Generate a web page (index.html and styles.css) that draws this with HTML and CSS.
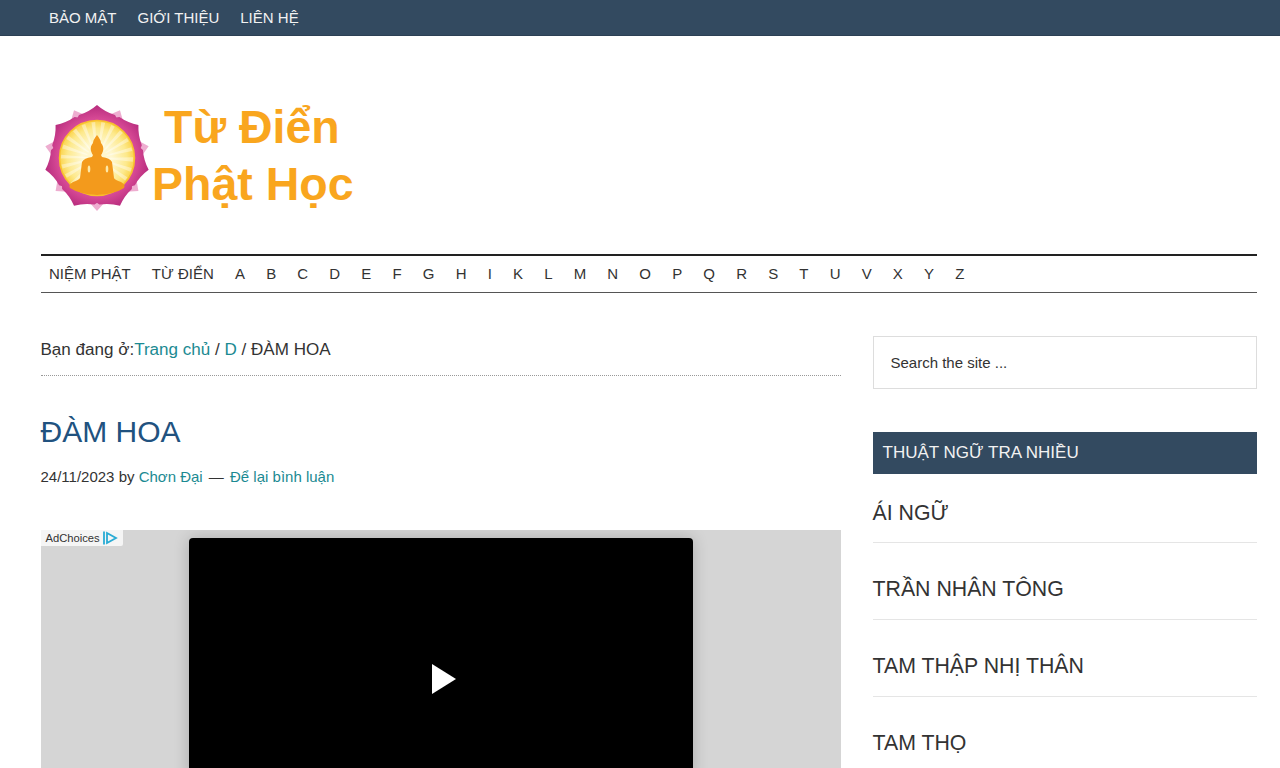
FILE: index.html
```html
<!DOCTYPE html>
<html lang="vi">
<head>
<meta charset="UTF-8">
<title>ĐÀM HOA - Từ Điển Phật Học</title>
<link rel="stylesheet" href="styles.css">
</head>
<body>
<nav class="top-bar">
<ul class="top-menu">
<li><a href="#">BẢO MẬT</a></li>
<li><a href="#">GIỚI THIỆU</a></li>
<li><a href="#">LIÊN HỆ</a></li>
</ul>
</nav>
<div class="site">
<header class="site-header">
<a class="logo" href="#">
<svg class="lotus" width="110" height="110" viewBox="-55 -55 110 110">
<defs>
<radialGradient id="petalFill" gradientUnits="userSpaceOnUse" cx="0" cy="0" r="54">
<stop offset="0.65" stop-color="#e0529c"/>
<stop offset="1" stop-color="#b52a7c"/>
</radialGradient>
<radialGradient id="sunFill" gradientUnits="userSpaceOnUse" cx="0" cy="0" r="37">
<stop offset="0.4" stop-color="#fff8d0"/>
<stop offset="0.8" stop-color="#fde98c"/>
<stop offset="1" stop-color="#fbd550"/>
</radialGradient>
<path id="smallPetal" d="M0 -53 L8 -44 L6 -34 L-6 -34 L-8 -44 Z"/>
<path id="petal" d="M0 -53 Q8 -46 18 -43 Q24 -34 20 -27 L-20 -27 Q-24 -34 -18 -43 Q-8 -46 0 -53 Z"/>
</defs>
<g fill="#eeadd0">
<use href="#smallPetal" transform="rotate(25.7)"/>
<use href="#smallPetal" transform="rotate(77.1)"/>
<use href="#smallPetal" transform="rotate(128.6)"/>
<use href="#smallPetal" transform="rotate(180)"/>
<use href="#smallPetal" transform="rotate(231.4)"/>
<use href="#smallPetal" transform="rotate(282.9)"/>
<use href="#smallPetal" transform="rotate(334.3)"/>
</g>
<g fill="url(#petalFill)">
<use href="#petal"/>
<use href="#petal" transform="rotate(51.4)"/>
<use href="#petal" transform="rotate(102.9)"/>
<use href="#petal" transform="rotate(154.3)"/>
<use href="#petal" transform="rotate(205.7)"/>
<use href="#petal" transform="rotate(257.1)"/>
<use href="#petal" transform="rotate(308.6)"/>
</g>
<circle r="37.5" fill="url(#sunFill)" stroke="#f8c02c" stroke-width="1.5"/>
<circle r="23" fill="none" stroke="#fff" stroke-opacity="0.4" stroke-width="26" stroke-dasharray="2.5 4"/>
<path fill="#f39a1c" d="M0 -23 Q4 -18 4 -15 Q7 -12 6 -7 Q5 -4 4 -3 L5 -1 Q13 0 15 4 L17 20 Q18 22 24 24 Q29 27 27 30 Q18 36 0 37 Q-18 36 -27 30 Q-29 27 -24 24 Q-18 22 -17 20 L-15 4 Q-13 0 -5 -1 L-4 -3 Q-5 -4 -6 -7 Q-7 -12 -4 -15 Q-4 -18 0 -23 Z"/>
<ellipse cx="-8" cy="11" rx="1.3" ry="3.5" fill="#fde9a8"/>
<ellipse cx="10" cy="11" rx="1.3" ry="3.5" fill="#fde9a8"/>
</svg>
<span class="logo-text">
<span class="logo-line-1">Từ Điển</span>
<span class="logo-line-2">Phật Học</span>
</span>
</a>
</header>
<nav class="main-nav">
<ul class="main-menu">
<li><a href="#">NIỆM PHẬT</a></li>
<li><a href="#">TỪ ĐIỂN</a></li>
<li><a href="#">A</a></li>
<li><a href="#">B</a></li>
<li><a href="#">C</a></li>
<li><a href="#">D</a></li>
<li><a href="#">E</a></li>
<li><a href="#">F</a></li>
<li><a href="#">G</a></li>
<li><a href="#">H</a></li>
<li><a href="#">I</a></li>
<li><a href="#">K</a></li>
<li><a href="#">L</a></li>
<li><a href="#">M</a></li>
<li><a href="#">N</a></li>
<li><a href="#">O</a></li>
<li><a href="#">P</a></li>
<li><a href="#">Q</a></li>
<li><a href="#">R</a></li>
<li><a href="#">S</a></li>
<li><a href="#">T</a></li>
<li><a href="#">U</a></li>
<li><a href="#">V</a></li>
<li><a href="#">X</a></li>
<li><a href="#">Y</a></li>
<li><a href="#">Z</a></li>
</ul>
</nav>
<div class="content-wrap">
<main class="content">
<div class="breadcrumb">Bạn đang ở:<a href="#">Trang chủ</a> / <a href="#">D</a> / ĐÀM HOA</div>
<h1 class="entry-title">ĐÀM HOA</h1>
<p class="entry-meta">24/11/2023 by <a href="#">Chơn Đại</a> <span class="dash">—</span> <a href="#">Để lại bình luận</a></p>
<div class="ad">
<div class="ad-choices">AdChoices
<svg width="15" height="14" viewBox="0 0 15 14"><path d="M1 0.5 V13.5" stroke="#29abd4" stroke-width="1.8" fill="none"/><path d="M4 2 L13 7 L4 12 Z" stroke="#29abd4" stroke-width="1.8" fill="none"/></svg>
</div>
<div class="video">
<svg class="play" width="24" height="30" viewBox="0 0 24 30"><path d="M0 0 L24 15 L0 30 Z" fill="#fff"/></svg>
</div>
</div>
</main>
<aside class="sidebar">
<div class="search-box">Search the site ...</div>
<h3 class="widget-title">THUẬT NGỮ TRA NHIỀU</h3>
<ul class="term-list">
<li><a href="#">ÁI NGỮ</a></li>
<li><a href="#">TRẦN NHÂN TÔNG</a></li>
<li><a href="#">TAM THẬP NHỊ THÂN</a></li>
<li><a href="#">TAM THỌ</a></li>
</ul>
</aside>
</div>
</div>
</body>
</html>
```

FILE: styles.css
```css
html,body{height:768px;overflow:hidden;}
body{margin:0;background-color:#fff;color:#333;font-family:"Liberation Sans",Arial,sans-serif;font-size:17.06px;}
a{color:inherit;text-decoration:none;}
ul{list-style:none;margin:0;padding:0;}

.top-bar{height:36px;background-color:#334a60;border-bottom:1px solid #2c4054;box-sizing:border-box;padding-left:40px;}
.top-menu{display:flex;}
.top-menu a{display:block;padding:0 9px;margin-right:3px;line-height:36px;font-size:15px;color:#f2f2f2;}

.site{padding:0 23.5px 0 40.5px;}
.site-header{height:218px;padding-top:60px;box-sizing:border-box;}
.logo{display:flex;width:320px;height:120px;align-items:center;}
.lotus{flex:none;margin:4px 0 0 1.5px;}
.logo-text{display:flex;flex-direction:column;font-weight:bold;color:#f9a61e;line-height:57px;font-size:46.5px;}
.logo-line-1{margin-left:12px;}

.main-nav{border-top:2px solid #222;border-bottom:1px solid #555;height:39px;box-sizing:border-box;}
.main-menu{display:flex;}
.main-menu a{display:block;padding:0 10.58px;line-height:36px;font-size:15px;color:#333;}
.main-menu li:first-child a{padding-left:8.5px;}

.content-wrap{display:flex;justify-content:space-between;padding-top:43px;}
.content{width:800px;}
.breadcrumb{height:39px;line-height:27px;border-bottom:1px dotted #999;color:#333;}
.breadcrumb a,.entry-meta a{color:#1b8a92;}
.entry-title{margin:38px 0 0;font-size:30px;font-weight:normal;line-height:36px;color:#21527f;}
.entry-meta{margin:15px 0 0;font-size:15px;line-height:24px;}
.dash{margin:0 2px;}
.ad{position:relative;height:238px;margin-top:41px;background-color:#d5d5d5;display:flex;justify-content:center;padding-top:8px;box-sizing:border-box;overflow:hidden;}
.ad-choices{position:absolute;left:0;top:0;display:flex;align-items:center;gap:3px;height:16px;padding:0 5px;background-color:#f5f5f5;border-bottom-right-radius:2px;font-size:11.2px;color:#333;}
.video{width:504px;height:240px;background-color:#000;border-radius:4px 4px 0 0;box-shadow:0 0 16px rgba(0,0,0,0.2);display:flex;justify-content:center;padding:126px 0 0 6px;box-sizing:border-box;}

.sidebar{width:384px;}
.search-box{height:53px;line-height:52px;border:1px solid #ddd;box-sizing:border-box;padding-left:17px;font-size:15px;color:#333;}
.widget-title{margin:43px 0 0;height:42px;line-height:42px;background-color:#334a60;padding-left:10px;font-size:17px;font-weight:normal;color:#f2f2f2;}
.term-list li{height:77px;box-sizing:border-box;padding-top:32px;border-bottom:1px solid #e5e5e5;font-size:21.3px;line-height:28px;color:#333;}
.term-list li:first-child{height:69px;padding-top:25px;}
```
